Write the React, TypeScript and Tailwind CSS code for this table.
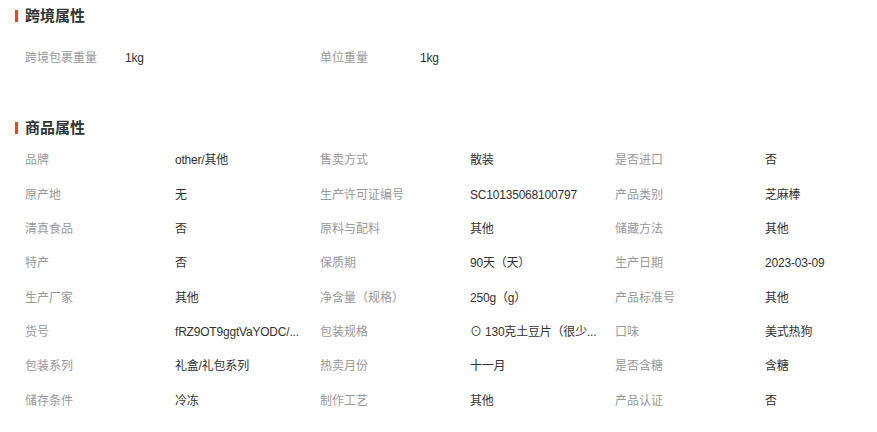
import React from "react";

const font = { fontFamily: '"Liberation Sans", "Noto Sans CJK SC", sans-serif' };

const cross: [string, string][] = [
  ["跨境包裹重量", "1kg"],
  ["单位重量", "1kg"],
];

const goods: [string, string][] = [
  ["品牌", "other/其他"],
  ["售卖方式", "散装"],
  ["是否进口", "否"],
  ["原产地", "无"],
  ["生产许可证编号", "SC10135068100797"],
  ["产品类别", "芝麻棒"],
  ["清真食品", "否"],
  ["原料与配料", "其他"],
  ["储藏方法", "其他"],
  ["特产", "否"],
  ["保质期", "90天（天）"],
  ["生产日期", "2023-03-09"],
  ["生产厂家", "其他"],
  ["净含量（规格）", "250g（g）"],
  ["产品标准号", "其他"],
  ["货号", "fRZ9OT9ggtVaYODC/..."],
  ["包装规格", "⊙ 130克土豆片（很少..."],
  ["口味", "美式热狗"],
  ["包装系列", "礼盒/礼包系列"],
  ["热卖月份", "十一月"],
  ["是否含糖", "含糖"],
  ["储存条件", "冷冻"],
  ["制作工艺", "其他"],
  ["产品认证", "否"],
];

function Heading({ title }: { title: string }) {
  return (
    <div className="flex items-center h-[30px] pl-[15px]">
      <span className="w-[3px] h-[12px] bg-[#ff4400]" />
      <span className="ml-[7px] text-[15px] font-bold text-[#333]">{title}</span>
    </div>
  );
}

function Item({ label, value, labelW }: { label: string; value: string; labelW: number }) {
  return (
    <div className="flex items-center w-[295px] h-[34.3px] text-[12px]">
      <span
        className={"text-[#999] shrink-0 " + (labelW === 100 ? "w-[100px]" : "w-[150px]")}
      >
        {label}
      </span>
      <span className="text-[#333] whitespace-nowrap tracking-[-0.2px]">{value}</span>
    </div>
  );
}

export default function App() {
  return (
    <div className="w-[877px] h-[432px] bg-white overflow-hidden pt-[1px]" style={font}>
      <Heading title="跨境属性" />
      <div className="flex pl-[25px] mt-[10px]">
        {cross.map(([l, v]) => (
          <Item key={l} label={l} value={v} labelW={100} />
        ))}
      </div>
      <div className="h-[38px]" />
      <Heading title="商品属性" />
      <div className="grid grid-cols-[295px_295px_295px] pl-[25px]">
        {goods.map(([l, v]) => (
          <Item key={l} label={l} value={v} labelW={150} />
        ))}
      </div>
    </div>
  );
}
